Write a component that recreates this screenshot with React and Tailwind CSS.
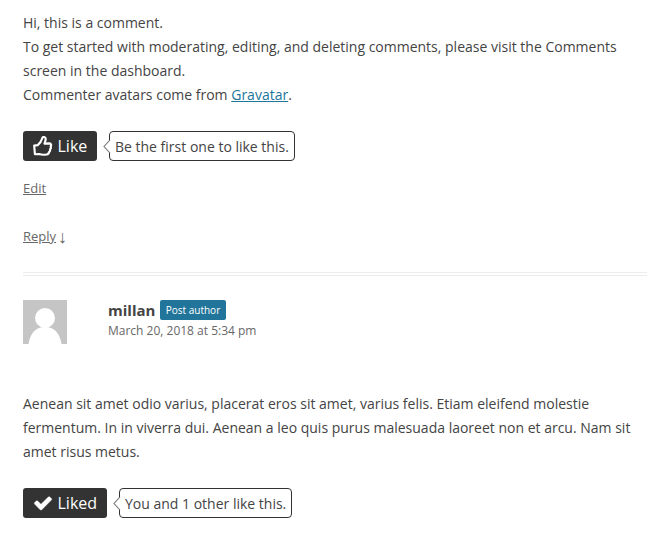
function ThumbIcon() {
  return (
    <svg width="20" height="20" viewBox="0.6 0.5 18.6 18.6" fill="none" stroke="#fff" strokeWidth="2" strokeLinejoin="round">
      <path d="M1.7 9.4L5 9C7.2 7.4 8.6 5 9.4 2.2C9.8 1 12.3 1.1 12.4 3.2C12.5 4.7 11.7 6 11.3 7.6L15.8 7.4C17.6 7.6 17.8 9.4 17 10.2C17.5 11.2 17.2 12.3 16.4 12.9C16.7 14 16.4 14.9 15.6 15.4C15.4 16.8 14.7 17.5 13.3 17.7C10.6 18.1 8.4 18 6.3 17.3L2.4 17.5Z" />
    </svg>
  );
}

function CheckIcon() {
  return (
    <svg width="20" height="20" viewBox="0 0 1792 1792" fill="#fff" stroke="#fff" strokeWidth="40">
      <path d="M1671 566q0 40-28 68l-724 724-136 136q-28 28-68 28t-68-28l-136-136-362-362q-28-28-28-68t28-68l136-136q28-28 68-28t68 28l294 295 656-657q28-28 68-28t68 28l136 136q28 28 28 68z" />
    </svg>
  );
}

function LikeButton({ icon, label, text, btn, bubble }) {
  return (
    <div className="flex h-[30px]">
      <button className={"flex h-[30px] items-center rounded-[3px] bg-[#333] pl-[10px] text-[16px] text-white " + btn}>
        <span className="flex w-[24.5px]">{icon}</span>
        {label}
      </button>
      <div className={"relative ml-[12px] flex h-[30px] items-center whitespace-nowrap rounded-[4px] border border-[#333] bg-white pl-[5px] pt-px text-[14px] text-[#444] " + bubble}>
        <svg className="absolute -left-[7px] top-[8px]" width="8" height="13" viewBox="0 0 8 13">
          <path d="M7 0L1 6.5L7 13" fill="#fff" stroke="#777" strokeWidth="1.1" />
        </svg>
        {text}
      </div>
    </div>
  );
}

export default function App() {
  return (
    <div className="h-[535px] w-[647px] overflow-hidden bg-white pl-[23px] pt-[11px] font-['Open_Sans',sans-serif] text-[14px] leading-[24px] text-[#444]">
      <p className="whitespace-nowrap">
        Hi, this is a comment.<br />
        To get started with moderating, editing, and deleting comments, please visit the Comments<br />
        screen in the dashboard.<br />
        Commenter avatars come from <a className="text-[#21759b] underline">Gravatar</a>.
      </p>
      <div className="mt-[24px]">
        <LikeButton icon={<ThumbIcon />} label="Like" text="Be the first one to like this." btn="w-[74px]" bubble="w-[186px]" />
      </div>
      <div className="mt-[15px] text-[13px] text-[#686868]"><a className="underline">Edit</a></div>
      <div className="mt-[24px] flex h-[24px] text-[13px] text-[#686868]">
        <a className="underline">Reply</a>
        <span className="ml-[2px] pt-px font-['Liberation_Sans',sans-serif] text-[18px]">↓</span>
      </div>
      <div className="mt-[24px] h-[4px] border-y border-[#ededed]" />
      <header className="mt-[24px] flex h-[44px]">
        <svg width="44" height="44" viewBox="0 0 44 44">
          <rect width="44" height="44" fill="#c5c5c5" />
          <circle cx="22" cy="18" r="10" fill="#fff" />
          <path d="M5.5 44C7 34 12 27 22 27S37 34 38.5 44Z" fill="#fff" />
        </svg>
        <div className="ml-[41px]">
          <div className="flex h-[20px] items-center">
            <b className="w-[52px] text-[15px] font-bold">millan</b>
            <span className="flex h-[20px] w-[66px] items-center justify-center rounded-[2px] bg-[#21759b] text-[10px] font-medium text-white">Post author</span>
          </div>
          <div className="pt-px text-[12px] leading-[20px] text-[#686868]">March 20, 2018 at 5:34 pm</div>
        </div>
      </header>
      <p className="mt-[48px] whitespace-nowrap">
        Aenean sit amet odio varius, placerat eros sit amet, varius felis. Etiam eleifend molestie<br />
        fermentum. In in viverra dui. Aenean a leo quis purus malesuada laoreet non et arcu. Nam sit<br />
        amet risus metus.
      </p>
      <div className="mt-[24px]">
        <LikeButton icon={<CheckIcon />} label="Liked" text="You and 1 other like this." btn="w-[84px]" bubble="w-[173px]" />
      </div>
    </div>
  );
}
